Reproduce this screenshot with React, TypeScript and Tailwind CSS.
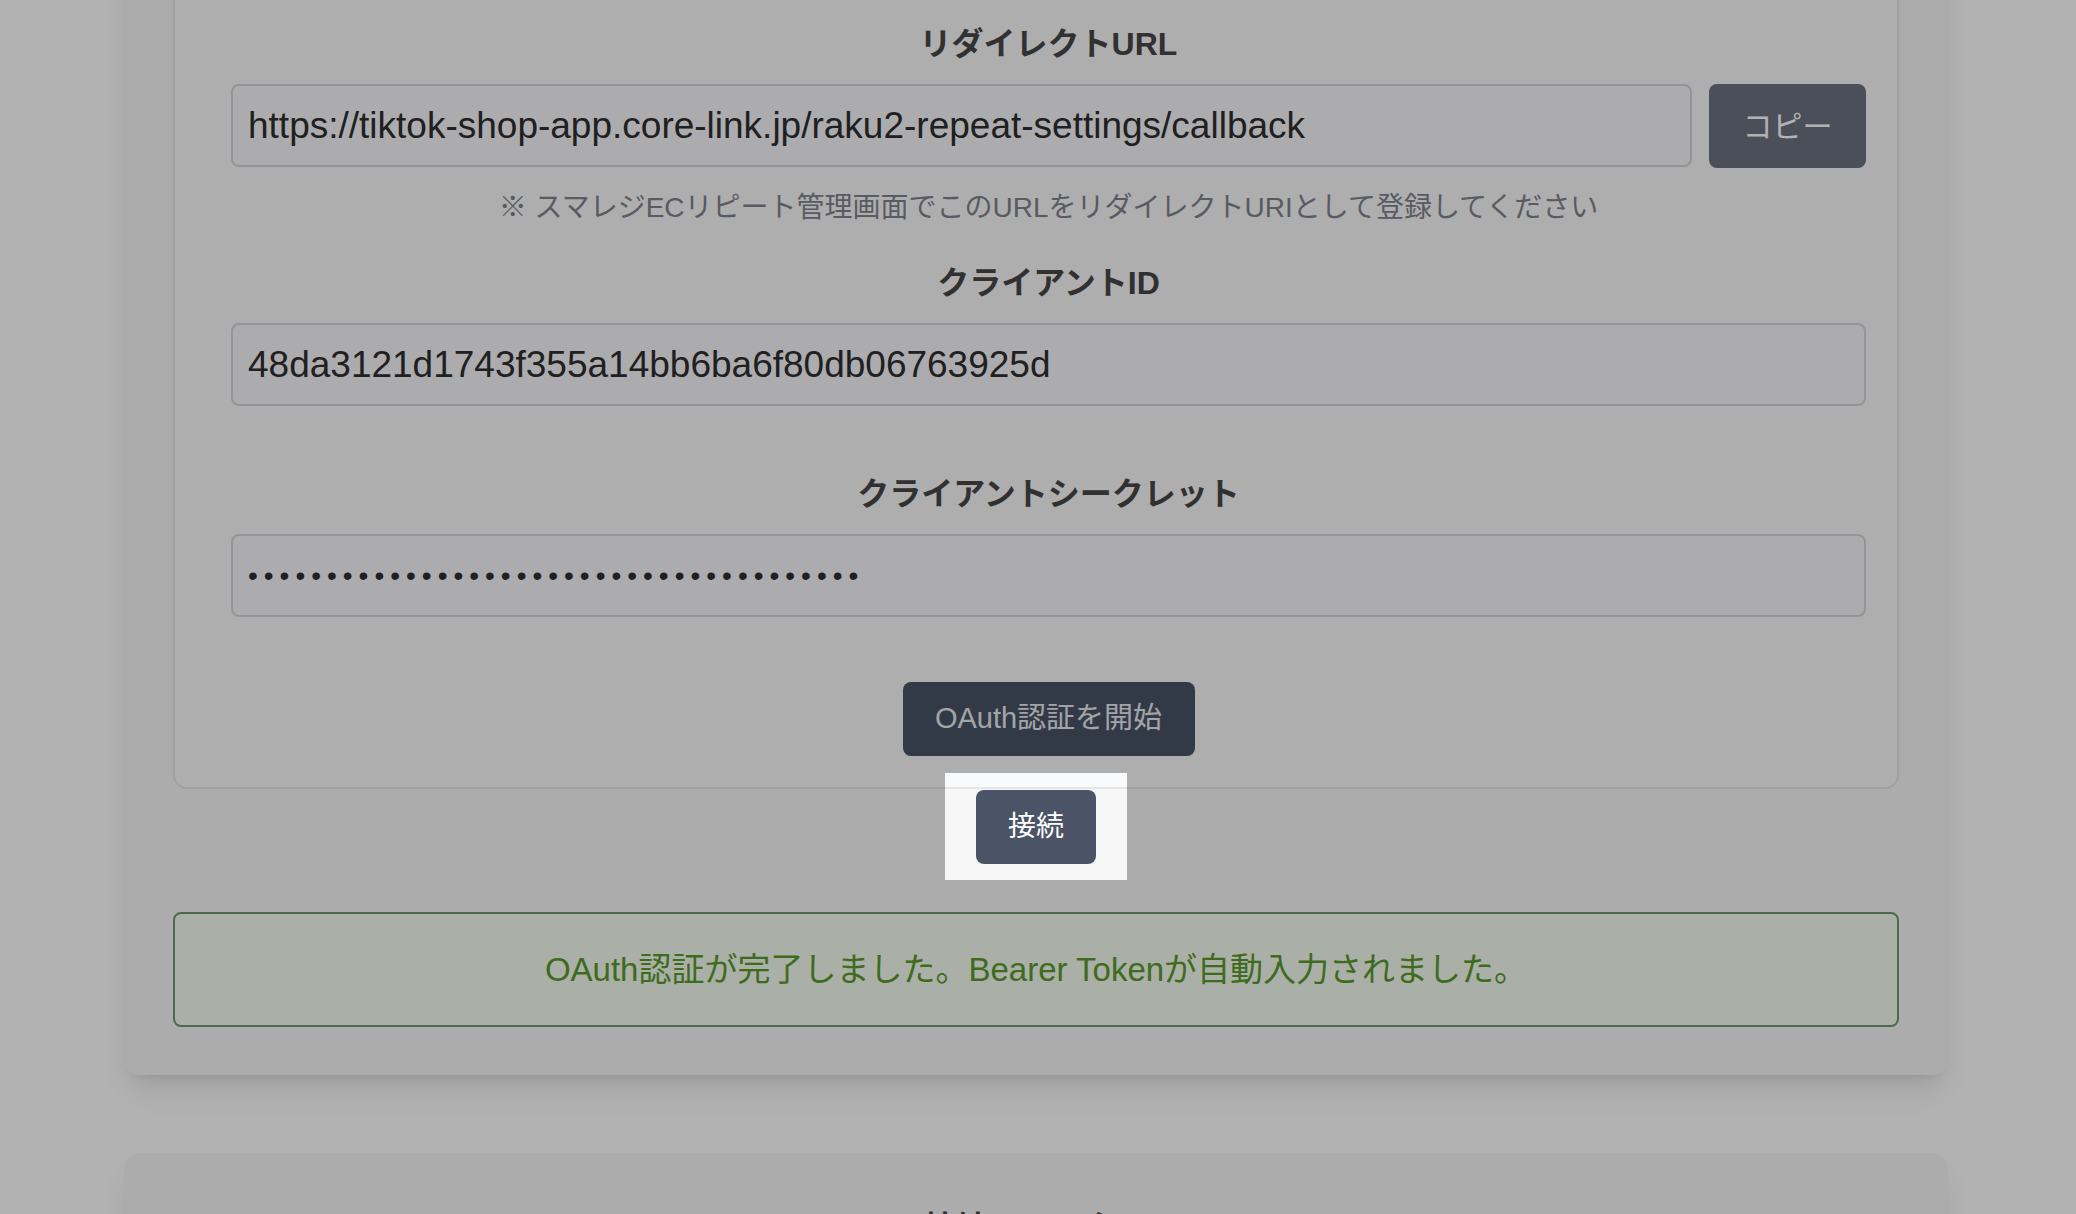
import React from "react";

const REDIRECT_URL = "https://tiktok-shop-app.core-link.jp/raku2-repeat-settings/callback";
const CLIENT_ID = "48da3121d1743f355a14bb6ba6f80db06763925d";
const CLIENT_SECRET = "f3b9c1d27e8a4605b91c2d7e3f48a6b0c5d1e97";

function FieldLabel({ children, className = "" }: { children: React.ReactNode; className?: string }) {
  return (
    <label className={`mb-4 block text-center text-[32px] font-bold leading-[48px] text-[#474747] ${className}`}>
      {children}
    </label>
  );
}

function TextField({ value, type = "text" }: { value: string; type?: string }) {
  return (
    <input
      type={type}
      readOnly
      value={value}
      className={`block h-[83px] w-full min-w-0 rounded-lg border-2 border-[#d1d4d9] bg-[#f6f7f9] px-[15px] text-[#2e2e2e] outline-none ${
        type === "password" ? "text-[28px] tracking-[6px]" : "text-[37px]"
      }`}
    />
  );
}

function OAuthSettings() {
  return (
    <section className="rounded-2xl bg-[#f7f7f7] px-[49px] pt-[49px] pb-[48px] shadow-[0_20px_30px_-6px_rgba(0,0,0,0.1),0_8px_12px_-8px_rgba(0,0,0,0.1)]">
      <div className="rounded-[14px] border-2 border-[#e4e6ea] bg-[#f9fafb] pt-[31px] pr-[31px] pb-[31px] pl-[56px]">
        <FieldLabel>リダイレクトURL</FieldLabel>
        <div className="flex items-start gap-[17px]">
          <div className="min-w-0 flex-1">
            <TextField value={REDIRECT_URL} />
          </div>
          <button className="h-[84px] w-[157px] shrink-0 rounded-lg bg-[#6b7280] text-[30px] text-white">
            コピー
          </button>
        </div>
        <p className="mt-[19px] text-center text-[28px] leading-[42px] text-[#81838c]">
          ※ スマレジECリピート管理画面でこのURLをリダイレクトURIとして登録してください
        </p>

        <FieldLabel className="mt-[30px]">クライアントID</FieldLabel>
        <TextField value={CLIENT_ID} />

        <FieldLabel className="mt-[64px]">クライアントシークレット</FieldLabel>
        <TextField value={CLIENT_SECRET} type="password" />

        <div className="mt-[65px] flex justify-center">
          <button className="h-[74px] w-[292px] rounded-lg bg-[#4a5366] text-[29px] text-[#e9ecf0]">
            OAuth認証を開始
          </button>
        </div>
      </div>

      {/* tour step: highlighted connect button */}
      <div className="mt-px flex justify-center">
        <div className="relative">
          <span className="pointer-events-none absolute -inset-x-[31px] -top-[17px] -bottom-[16px] z-10 shadow-[0_0_0_9999px_rgba(0,0,0,0.3)]" />
          <button className="h-[74px] w-[120px] rounded-lg bg-[#4b5366] text-[28px] text-white">接続</button>
        </div>
      </div>

      <div className="mt-12 flex h-[115px] items-center justify-center rounded-lg border-2 border-[#6f9872] bg-[#f4fcef] text-[33px] text-[#599a2b]">
        OAuth認証が完了しました。Bearer Tokenが自動入力されました。
      </div>
    </section>
  );
}

export default function App() {
  return (
    <div className="h-screen overflow-hidden bg-white font-['Liberation_Sans','Noto_Sans_CJK_JP',sans-serif]">
      <main className="-mt-[62px] ml-[124px] w-[1824px]">
        <OAuthSettings />
        <section className="mt-[78px] h-[400px] rounded-2xl bg-[#f7f7f7] px-12 pt-[51px] pb-12 shadow-[0_20px_30px_-6px_rgba(0,0,0,0.1),0_8px_12px_-8px_rgba(0,0,0,0.1)]">
          <h2 className="text-center text-[32px] font-bold leading-[48px] text-[#474747]">接続ステータス</h2>
        </section>
      </main>
    </div>
  );
}
